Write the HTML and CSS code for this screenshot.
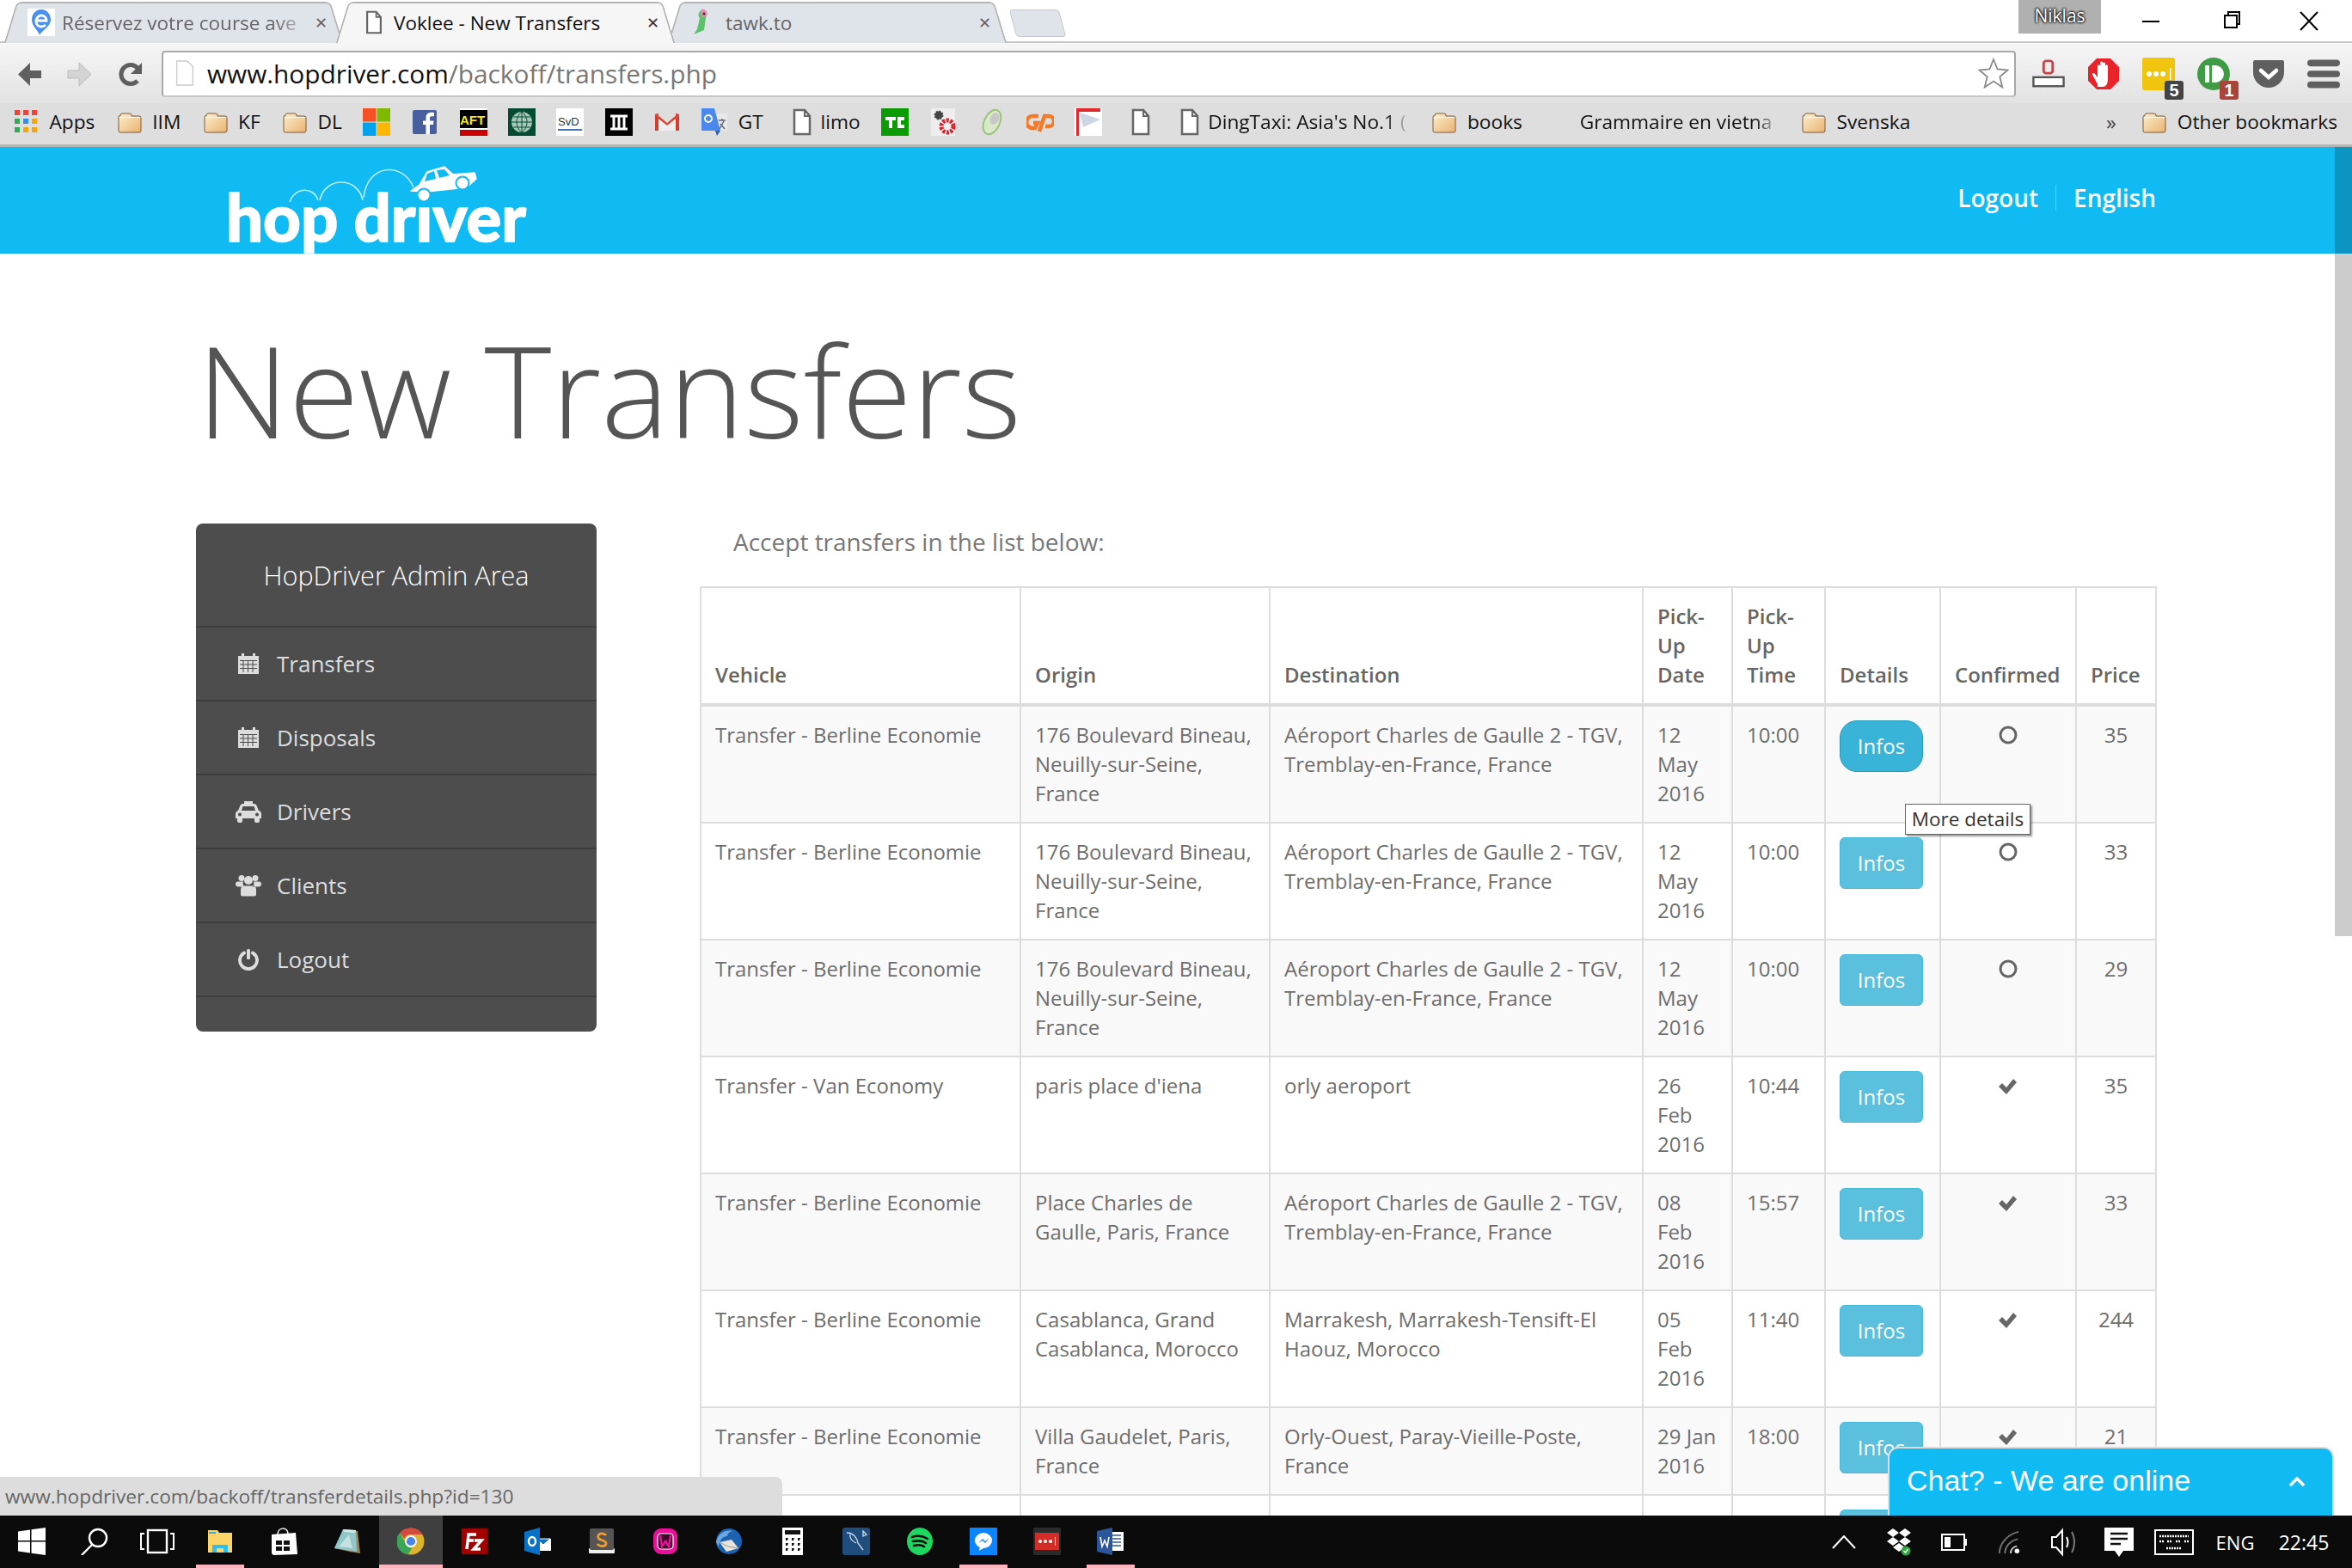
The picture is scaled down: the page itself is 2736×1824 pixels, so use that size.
FILE: index.html
```html
<!DOCTYPE html>
<html lang="en">
<head>
<meta charset="utf-8">
<title>Voklee - New Transfers</title>
<link rel="stylesheet" href="styles.css">
</head>
<body>
<svg class="defs" width="0" height="0" aria-hidden="true">
  <defs>
    <linearGradient id="fg" x1="0" y1="0" x2="1" y2="1"><stop offset="0" stop-color="#fdf0cf"/><stop offset="1" stop-color="#e8b270"/></linearGradient>
    <symbol id="folder" viewBox="0 0 32 32"><path d="M5 8q0-2 2-2h9q2 0 2 2v1h9q2 0 2 2v15q0 2-2 2H5q-2 0-2-2V10q0-2 2-1z" fill="url(#fg)" stroke="#7c5a3a" stroke-width="1"/><path d="M3.600 10.500h24.800" stroke="#fff5dc" stroke-width="1"/></symbol>
    <symbol id="page" viewBox="0 0 22 32"><path d="M2 2h12l6 7v21H2z" fill="#fff" stroke="#666" stroke-width="2.500"/><path d="M14 2v7h6" fill="none" stroke="#666" stroke-width="2"/></symbol>
    <symbol id="cal" viewBox="0 0 26 26"><path d="M1 4h4V1h3v3h10V1h3v3h4v21H1z" fill="#ddd"/><g fill="#4d4d4d"><rect x="3" y="9" width="20" height="1"/><rect x="3" y="13.500" width="20" height="1"/><rect x="3" y="18" width="20" height="1"/><rect x="6.500" y="9" width="1" height="14"/><rect x="12" y="9" width="1" height="14"/><rect x="17.500" y="9" width="1" height="14"/></g></symbol>
  </defs>
</svg>

<div class="browser">
  <div class="tabstrip">
    <div class="tab">
      <svg class="fav" viewBox="0 0 32 32"><rect width="32" height="32" fill="#fff"/><path d="M16 1C9 1 5 7 5 13c0 8 9 14 9 18 3-6 13-10 13-18C27 7 23 1 16 1z" fill="#4a90f0"/><path d="M10 14h12c0-4-3-6-6-6s-6 3-6 7 3 6 6 6c2 0 4-1 5-2" fill="none" stroke="#fff" stroke-width="3"/></svg>
      <span class="tabtitle muted fade">Réservez votre course ave</span>
      <span class="tabx">✕</span>
    </div>
    <div class="tab active">
      <svg class="favpage" viewBox="0 0 22 32"><use href="#page"/></svg>
      <span class="tabtitle">Voklee - New Transfers</span>
      <span class="tabx">✕</span>
    </div>
    <div class="tab">
      <svg class="fav" viewBox="0 0 32 32"><path d="M13 2c5 0 6 5 4 9l-2 14-12 5 4-6 3-13c-3-3-1-9 3-9z" fill="#5cc16b"/><path d="M12 1c5-1 8 3 6 8l-5 1c-2-3-3-6-1-9z" fill="#e88bb0"/><circle cx="15" cy="6" r="1.500" fill="#333"/></svg>
      <span class="tabtitle muted">tawk.to</span>
      <span class="tabx">✕</span>
    </div>
    <div class="newtab"></div>
    <div class="spacer"></div>
    <div class="winctl">
      <span class="profile">Niklas</span>
      <svg class="winbtn" viewBox="0 0 92 39"><rect x="36" y="24" width="20" height="2" fill="#000"/></svg>
      <svg class="winbtn" viewBox="0 0 92 39"><path d="M40 18h14v14H40zM44 18v-4h13v14h-3" fill="none" stroke="#000" stroke-width="2"/></svg>
      <svg class="winbtn" viewBox="0 0 92 39"><path d="M36 14l20 21M56 14L36 35" stroke="#000" stroke-width="2"/></svg>
    </div>
  </div>

  <div class="toolbar">
    <svg class="navbtn" viewBox="0 0 33 33"><path d="M17 3L3 16.500 17 30v-9h13v-9H17z" fill="#5f5f5f"/></svg>
    <svg class="navbtn" viewBox="0 0 33 33"><path d="M16 3l14 13.500L16 30v-9H3v-9h13z" fill="#d4d4d4" stroke="#bbb"/></svg>
    <svg class="navbtn" viewBox="0 0 33 33"><path d="M26 24a11 11 0 1 1 0-15" fill="none" stroke="#5f5f5f" stroke-width="5"/><path d="M31 3v13H18z" fill="#5f5f5f"/></svg>
    <div class="omnibox">
      <svg class="omnipage" viewBox="0 0 22 32"><path d="M1 1h13l7 7v23H1z" fill="#fff" stroke="#ccc" stroke-width="1.500"/></svg>
      <span class="url"><b>www.hopdriver.com</b>/backoff/transfers.php</span>
      <svg class="star" viewBox="0 0 36 36"><path d="M18 2l4.500 11.500 12 1-9.200 7.800 3 12.200L18 27.500 7.700 34.500l3-12.200L1.500 14.500l12-1z" fill="#fff" stroke="#8a8a8a" stroke-width="1.800"/></svg>
    </div>
    <div class="exts">
      <div class="ext"><svg viewBox="0 0 40 34"><rect x="14" y="1" width="11" height="15" rx="3" fill="none" stroke="#c0474a" stroke-width="3"/><rect x="1.500" y="21" width="37" height="11" fill="#fff" stroke="#555" stroke-width="2.500"/></svg></div>
      <div class="ext"><svg viewBox="0 0 38 38"><path d="M11 1h16l10 10v16L27 37H11L1 27V11z" fill="#e8232a"/><path d="M12 31L6 20c-1-2 2-3 3-1l3 4V10c0-2 3-2 3 0v7-11c0-2 3-2 3 0v11-10c0-2 3-2 3 0v10-7c0-2 3-2 3 0v15c0 5-2 9-6 9h-6z" fill="#fff"/></svg></div>
      <div class="ext"><svg viewBox="0 0 38 38"><rect width="38" height="38" rx="3" fill="#f0c40f"/><circle cx="8" cy="19" r="3" fill="#fff"/><circle cx="16" cy="19" r="3" fill="#fff"/><circle cx="24" cy="19" r="3" fill="#fff"/><rect x="32" y="12" width="1.500" height="14" fill="#fff"/></svg><span class="badge dark">5</span></div>
      <div class="ext"><svg viewBox="0 0 38 38"><circle cx="19" cy="19" r="19" fill="#3f9c45"/><rect x="9" y="9" width="5" height="20" rx="1" fill="#fff"/><path d="M17 9h4a10 10 0 0 1 0 20h-4z" fill="#fff"/></svg><span class="badge red">1</span></div>
      <div class="ext"><svg viewBox="0 0 38 34"><path d="M3 1h32q2 0 2 2v12a18 18 0 0 1-36 0V3q0-2 2-2z" fill="#5f5f5f"/><path d="M10 13l9 8 9-8" fill="none" stroke="#fff" stroke-width="4.500" stroke-linecap="round"/></svg></div>
      <div class="ext"><svg viewBox="0 0 30 26"><rect width="30" height="6" rx="3" fill="#5f5f5f"/><rect y="10" width="30" height="6" rx="3" fill="#5f5f5f"/><rect y="20" width="30" height="6" rx="3" fill="#5f5f5f"/></svg></div>
    </div>
  </div>

  <div class="bookmarks">
    <a class="bm"><svg class="ic" viewBox="0 0 32 32"><g fill="#f2413a"><rect x="2" y="2" width="6" height="6"/><rect x="12" y="2" width="6" height="6"/><rect x="22" y="2" width="6" height="6"/></g><rect x="2" y="12" width="6" height="6" fill="#34a85a"/><rect x="12" y="12" width="6" height="6" fill="#2f8df0"/><rect x="22" y="12" width="6" height="6" fill="#f2a60c"/><rect x="2" y="22" width="6" height="6" fill="#34a85a"/><rect x="12" y="22" width="6" height="6" fill="#f2a60c"/><rect x="22" y="22" width="6" height="6" fill="#f2a60c"/></svg><span>Apps</span></a>
    <a class="bm"><svg class="ic"><use href="#folder"/></svg><span>IIM</span></a>
    <a class="bm"><svg class="ic"><use href="#folder"/></svg><span>KF</span></a>
    <a class="bm"><svg class="ic"><use href="#folder"/></svg><span>DL</span></a>
    <a class="bm"><svg class="ic" viewBox="0 0 32 32"><rect width="15.500" height="15.500" fill="#f65125"/><rect x="16.500" width="15.500" height="15.500" fill="#7eb900"/><rect y="16.500" width="15.500" height="15.500" fill="#00a3ee"/><rect x="16.500" y="16.500" width="15.500" height="15.500" fill="#ffb800"/></svg></a>
    <a class="bm"><svg class="ic" viewBox="0 0 32 32"><rect x="2" y="2" width="28" height="28" rx="2" fill="#47609d"/><path d="M22 30V19h4l.600-4.500H22v-3c0-1.500.600-2.300 2.300-2.300H27V5c-4-.600-9.500-.500-9.500 6v3.500H14V19h3.500v11z" fill="#fff"/></svg></a>
    <a class="bm"><svg class="ic" viewBox="0 0 32 32"><rect width="32" height="32" fill="#fff"/><rect y="25" width="32" height="7" fill="#cc0000"/><rect y="2" width="32" height="21" fill="#000"/><text x="0" y="19" class="svgtxt aft">AFT</text></svg></a>
    <a class="bm"><svg class="ic" viewBox="0 0 32 32"><rect width="32" height="32" fill="#034c33"/><circle cx="16" cy="16" r="12" fill="#a8c8b8"/><path d="M4 16h24M16 4v24M6 10h20M6 22h20M16 4c-8 6-8 18 0 24M16 4c8 6 8 18 0 24" fill="none" stroke="#034c33"/></svg></a>
    <a class="bm"><svg class="ic" viewBox="0 0 32 32"><rect width="32" height="32" fill="#fff"/><text x="2" y="20" class="svgtxt svd">SvD</text><rect x="2" y="24" width="28" height="2" fill="#4a6fb5"/></svg></a>
    <a class="bm"><svg class="ic" viewBox="0 0 32 32"><rect width="32" height="32" fill="#000"/><path d="M6 9h20M6 24h20M10 9v15M16 9v15M22 9v15" stroke="#fff" stroke-width="3"/></svg></a>
    <a class="bm"><svg class="ic" viewBox="0 0 32 32"><path d="M4 7l12 9 12-9v19H4z" fill="#eee"/><path d="M2 7l4-1v20H2zM30 7l-4-1v20h4z" fill="#d0402f"/><path d="M3 6l13 11L29 6l1 3-14 11L2 9z" fill="#d9493a"/></svg></a>
    <a class="bm"><svg class="ic" viewBox="0 0 32 32"><path d="M13 6h17v20H13z" fill="#e8e8e8"/><path d="M0 0h15l7 26H0z" fill="#4a88ee"/><path d="M16 26l2 6 4-6z" fill="#2a5fc0"/><circle cx="8" cy="12" r="4" fill="none" stroke="#fff" stroke-width="2"/><path d="M20 14h8M24 12v2M21 24l5-9M22 18l5 6" stroke="#667" stroke-width="1.500" fill="none"/></svg><span>GT</span></a>
    <a class="bm"><svg class="ic" viewBox="-5 0 32 32"><use href="#page"/></svg><span>limo</span></a>
    <a class="bm"><svg class="ic" viewBox="0 0 32 32"><rect width="32" height="32" fill="#0a9c00"/><path d="M5 10h12v4h-4v9H9v-9H5zM19 10h8v4h-4v5h4v4h-8z" fill="#fff"/></svg></a>
    <a class="bm"><svg class="ic" viewBox="0 0 32 32"><rect x="2" width="28" height="32" fill="#eee"/><circle cx="11" cy="8" r="4.500" fill="#444" stroke="#444" stroke-dasharray="2 1.500" stroke-width="2"/><circle cx="21" cy="21" r="7" fill="none" stroke="#e0202a" stroke-width="5" stroke-dasharray="3 1.500"/></svg></a>
    <a class="bm"><svg class="ic" viewBox="0 0 32 32"><ellipse cx="16" cy="16" rx="9" ry="15" transform="rotate(25 16 16)" fill="#d8e8c8" stroke="#9cc27a" stroke-width="2"/><ellipse cx="19" cy="12" rx="5" ry="7" transform="rotate(25 19 12)" fill="#c8c8c8"/></svg></a>
    <a class="bm"><svg class="ic" viewBox="0 0 32 32"><path d="M14 9H7a6 6 0 0 0 0 14h3l3-6H8M15 27l6-18h5a6 6 0 0 1 0 12h-4" fill="none" stroke="#f47a28" stroke-width="4.500"/></svg></a>
    <a class="bm"><svg class="ic" viewBox="0 0 32 32"><rect width="32" height="32" fill="#fff"/><path d="M2 0h28v4H5v28H2z" fill="#e0282e"/><path d="M6 5l24 8L10 22z" fill="#b8c4d8" opacity=".7"/></svg></a>
    <a class="bm"><svg class="ic" viewBox="-5 0 32 32"><use href="#page"/></svg></a>
    <a class="bm"><svg class="ic" viewBox="-5 0 32 32"><use href="#page"/></svg><span class="fadebm w-ding">DingTaxi: Asia's No.1 (</span></a>
    <a class="bm"><svg class="ic"><use href="#folder"/></svg><span>books</span></a>
    <a class="bm"><span class="blankic"></span><span class="fadebm w-gram">Grammaire en vietna</span></a>
    <a class="bm"><svg class="ic"><use href="#folder"/></svg><span>Svenska</span></a>
    <span class="spacer"></span>
    <span class="more">»</span>
    <a class="bm other"><svg class="ic"><use href="#folder"/></svg><span>Other bookmarks</span></a>
  </div>
</div>

<div class="page">
  <header class="sitehead">
    <div class="logo">
      <span class="logotext">hop drıver</span>
      <svg class="logoart" viewBox="0 0 300 60">
        <path d="M72 42c6-18 28-18 33-2M107 40c6-28 44-28 50 0M158 37c4-40 46-42 58-12" fill="none" stroke="#fff" stroke-opacity=".7" stroke-width="1.600"/>
        <path d="M213 29l10-7 9-15 20-6 10 9 25-2 2 7-11 10-46 5z" fill="#fff" stroke="#fff" stroke-linejoin="round" stroke-width="1.500"/>
        <path d="M232 9l8-3 2 9-13 3zM243 5l9-1 6 7-12 3z" fill="#0fbbf2"/>
        <circle cx="273" cy="20" r="7.500" fill="#fff" stroke="#0fbbf2" stroke-width="2"/>
        <circle cx="228" cy="34" r="7.500" fill="#fff" stroke="#0fbbf2" stroke-width="2"/>
      </svg>
    </div>
    <nav class="sitenav"><a class="first">Logout</a><a>English</a></nav>
  </header>

  <main class="container">
    <h1>New Transfers</h1>
    <div class="columns">
      <aside class="sidebar">
        <div class="sidetitle">HopDriver Admin Area</div>
        <a class="sideitem"><svg class="sideic" viewBox="0 0 26 26"><use href="#cal"/></svg>Transfers</a>
        <a class="sideitem"><svg class="sideic" viewBox="0 0 26 26"><use href="#cal"/></svg>Disposals</a>
        <a class="sideitem"><svg class="sideic" viewBox="0 0 30 26"><path d="M10 1h10v3h2c1 0 2 1 2.500 2L27 12c2 .5 3 2 3 4v5h-2v3c0 1-1 2-2 2h-2c-1 0-2-1-2-2v-3H8v3c0 1-1 2-2 2H4c-1 0-2-1-2-2v-3H0v-5c0-2 1-3.500 3-4L5.500 6C6 5 7 4 8 4h2zM8.500 7L7 12h16l-1.500-5z" fill="#ddd" fill-rule="evenodd"/><circle cx="5" cy="16.500" r="2" fill="#4d4d4d"/><circle cx="25" cy="16.500" r="2" fill="#4d4d4d"/></svg>Drivers</a>
        <a class="sideitem"><svg class="sideic" viewBox="0 0 30 26"><circle cx="7" cy="4.500" r="3.500" fill="#ddd"/><circle cx="23" cy="4.500" r="3.500" fill="#ddd"/><circle cx="15" cy="7" r="5" fill="#ddd"/><path d="M0 11c0-2 2-2.500 4-2.500h5c-1 2 0 5 1 6H3c-2 0-3-1-3-3.500zM30 11c0-2-2-2.500-4-2.500h-5c1 2 0 5-1 6h7c2 0 3-1 3-3.500zM9 13.500h12c2 0 3 2 3 5v5c0 1-1 2-2 2H8c-1 0-2-1-2-2v-5c0-3 1-5 3-5z" fill="#ddd"/></svg>Clients</a>
        <a class="sideitem"><svg class="sideic" viewBox="0 0 26 26"><path d="M8 5.500a10 10 0 1 0 10 0" fill="none" stroke="#ddd" stroke-width="3.800" stroke-linecap="round"/><rect x="11" y="1" width="4" height="12" rx="1.500" fill="#ddd"/></svg>Logout</a>
        <div class="sidefoot"></div>
      </aside>
      <section class="maincol">
        <p class="lead">Accept transfers in the list below:</p>
        <table class="transfers">
          <colgroup><col class="c1"><col class="c2"><col class="c3"><col class="c4"><col class="c5"><col class="c6"><col class="c7"><col class="c8"></colgroup>
          <thead>
            <tr><th>Vehicle</th><th>Origin</th><th>Destination</th><th>Pick-Up Date</th><th>Pick-Up Time</th><th>Details</th><th>Confirmed</th><th>Price</th></tr>
          </thead>
          <tbody>
            <tr><td>Transfer - Berline Economie</td><td>176 Boulevard Bineau, Neuilly-sur-Seine, France</td><td>Aéroport Charles de Gaulle 2 - TGV, Tremblay-en-France, France</td><td>12 May 2016</td><td>10:00</td><td class="tipcell"><a class="btn hover">Infos</a><span class="tooltip">More details</span></td><td class="ctr"><svg class="st"><circle cx="12" cy="17" r="9" class="ring"/></svg></td><td class="ctr">35</td></tr>
            <tr><td>Transfer - Berline Economie</td><td>176 Boulevard Bineau, Neuilly-sur-Seine, France</td><td>Aéroport Charles de Gaulle 2 - TGV, Tremblay-en-France, France</td><td>12 May 2016</td><td>10:00</td><td><a class="btn">Infos</a></td><td class="ctr"><svg class="st"><circle cx="12" cy="17" r="9" class="ring"/></svg></td><td class="ctr">33</td></tr>
            <tr><td>Transfer - Berline Economie</td><td>176 Boulevard Bineau, Neuilly-sur-Seine, France</td><td>Aéroport Charles de Gaulle 2 - TGV, Tremblay-en-France, France</td><td>12 May 2016</td><td>10:00</td><td><a class="btn">Infos</a></td><td class="ctr"><svg class="st"><circle cx="12" cy="17" r="9" class="ring"/></svg></td><td class="ctr">29</td></tr>
            <tr><td>Transfer - Van Economy</td><td>paris place d'iena</td><td>orly aeroport</td><td>26 Feb 2016</td><td>10:44</td><td><a class="btn">Infos</a></td><td class="ctr"><svg class="st"><path class="tick" d="M1 18l4-4 5 5L18 9l4 4-12 14z"/></svg></td><td class="ctr">35</td></tr>
            <tr><td>Transfer - Berline Economie</td><td>Place Charles de Gaulle, Paris, France</td><td>Aéroport Charles de Gaulle 2 - TGV, Tremblay-en-France, France</td><td>08 Feb 2016</td><td>15:57</td><td><a class="btn">Infos</a></td><td class="ctr"><svg class="st"><path class="tick" d="M1 18l4-4 5 5L18 9l4 4-12 14z"/></svg></td><td class="ctr">33</td></tr>
            <tr><td>Transfer - Berline Economie</td><td>Casablanca, Grand Casablanca, Morocco</td><td>Marrakesh, Marrakesh-Tensift-El Haouz, Morocco</td><td>05 Feb 2016</td><td>11:40</td><td><a class="btn">Infos</a></td><td class="ctr"><svg class="st"><path class="tick" d="M1 18l4-4 5 5L18 9l4 4-12 14z"/></svg></td><td class="ctr">244</td></tr>
            <tr><td>Transfer - Berline Economie</td><td>Villa Gaudelet, Paris, France</td><td>Orly-Ouest, Paray-Vieille-Poste, France</td><td>29 Jan 2016</td><td>18:00</td><td><a class="btn">Infos</a></td><td class="ctr"><svg class="st"><path class="tick" d="M1 18l4-4 5 5L18 9l4 4-12 14z"/></svg></td><td class="ctr">21</td></tr>
            <tr><td></td><td></td><td></td><td></td><td></td><td><a class="btn"></a></td><td></td><td></td></tr>
          </tbody>
        </table>
      </section>
    </div>
  </main>

  <div class="thumb"></div>
  <div class="statusbubble">www.hopdriver.com/backoff/transferdetails.php?id=130</div>
  <div class="chat"><span>Chat? - We are online</span><svg class="chev" viewBox="0 0 22 14"><path d="M3 11l8-8 8 8" fill="none" stroke="#fff" stroke-width="3.500"/></svg></div>
</div>

<footer class="taskbar">
  <div class="tb sys"><svg viewBox="0 0 32 32"><path d="M0 4.500l14-2V15H0zM15.500 2.300L32 0v15H15.500zM0 16.500h14v13l-14-2zM15.500 16.500H32V32l-16.500-2.300z" fill="#fff"/></svg></div>
  <div class="tb sys"><svg viewBox="0 0 32 32"><circle cx="20" cy="12" r="10" fill="none" stroke="#fff" stroke-width="2.400"/><path d="M13 20L1 32" stroke="#fff" stroke-width="2.400"/></svg></div>
  <div class="tb sys"><svg class="wide" viewBox="0 0 40 32"><rect x="9" y="3" width="22" height="26" fill="none" stroke="#fff" stroke-width="2.400"/><path d="M5 7H1v18h4M35 7h4v18h-4" fill="none" stroke="#fff" stroke-width="2"/></svg></div>
  <div class="tb run"><svg viewBox="0 0 32 32"><path d="M2 3h11l2 3h15v23H2z" fill="#fbd568"/><rect x="3" y="5" width="8" height="2" fill="#3ba8e0"/><path d="M7 29v-9h18v9h-5v-5h-8v5z" fill="#2bc0f0"/></svg></div>
  <div class="tb"><svg viewBox="0 0 32 32"><path d="M2 8l28-2 2 25-28 1-2-2z" fill="#fff"/><path d="M9 8c0-9 12-9 12-1" fill="none" stroke="#fff" stroke-width="1.500"/><path d="M7 15h7v5H7zM16 15h7v5h-7zM7 22h7v5H7zM16 22h7v5h-7z" fill="#111"/></svg></div>
  <div class="tb"><svg viewBox="0 0 32 32"><path d="M12 2l16 2 3 26-12-2-18-4z" fill="#9a8458"/><path d="M11 2l15 1 1 25L1 24z" fill="#8fc8c8"/><path d="M11 2l15 1-1 3-13-1z" fill="#d6e8e8"/><path d="M6 22L18 8l4 16z" fill="#c8e0e0"/></svg></div>
  <div class="tb current"><svg viewBox="0 0 32 32"><circle cx="16" cy="16" r="15.500" fill="#ddb32b"/><path d="M16 .500A15.500 15.500 0 0 1 29.500 8H16a8 8 0 0 0-7.500 5L3 6A15.500 15.500 0 0 1 16 .500z" fill="#d24c3e"/><path d="M3 6l6.500 12a8 8 0 0 0 8 5.500l-5 8A15.500 15.500 0 0 1 3 6z" fill="#3aa757"/><circle cx="16" cy="16" r="6" fill="#4a86e8" stroke="#fff" stroke-width="1.800"/></svg></div>
  <div class="tb"><svg viewBox="0 0 32 32"><rect x="1" y="1" width="30" height="30" fill="#a50000" stroke="#700" stroke-dasharray="2 2"/><path d="M7 25L9 8h9M8 15h7M16 15h8L15 25h8" fill="none" stroke="#fff" stroke-width="3.400"/></svg></div>
  <div class="tb"><svg viewBox="0 0 32 32"><path d="M12 13h19v14H12z" fill="#fff"/><path d="M14 13l8 7 8-7z" fill="#0a72c6" stroke="#fff"/><path d="M0 5l18-5v32L0 27z" fill="#0a72c6"/><ellipse cx="9" cy="16" rx="4" ry="5" fill="none" stroke="#fff" stroke-width="2.400"/></svg></div>
  <div class="tb"><svg viewBox="0 0 32 32"><rect x="1" y="24" width="30" height="6" rx="1" fill="#eee"/><rect x="2" y="1" width="28" height="25" rx="2" fill="#555"/><path d="M21 9c-4-4-11-2-9 3 1 3 8 2 9 6 1 4-7 5-10 1" fill="none" stroke="#f39c2a" stroke-width="2.800"/></svg></div>
  <div class="tb"><svg viewBox="0 0 32 32"><rect x="2" y="1" width="28" height="30" rx="9" fill="#ec0f9a"/><rect x="7" y="7" width="18" height="18" rx="4" fill="#3a0a28" stroke="#fff" stroke-width="1.200"/><path d="M10 9l2 13 4-6 4 6 2-13" fill="none" stroke="#ec0f9a" stroke-width="2.400"/></svg></div>
  <div class="tb"><svg viewBox="0 0 32 32"><circle cx="16" cy="16" r="15" fill="#1c62b0"/><path d="M1 17C3 8 10 2 20 4c-4 1-6 3-6 6-5 0-9 4-10 12z" fill="#6aa8e0"/><path d="M5 17l14-3 8 10-14 4z" fill="#e8e4dc"/><path d="M5 17l10 5 12 2" fill="none" stroke="#999"/></svg></div>
  <div class="tb"><svg class="narrow" viewBox="0 0 24 32"><rect width="24" height="32" fill="#fff"/><rect x="3" y="3" width="18" height="5" fill="#111"/><g fill="#111"><path d="M4 12h3l-1 3H4zM11 12h3l-1 3h-2zM18 12h3l-1 3h-2zM4 18h3l-1 3H4zM11 18h3l-1 3h-2zM18 18h3l-1 3h-2zM4 24h3l-1 3H4zM11 24h3l-1 3h-2zM18 24h3l-1 3h-2z"/></g></svg></div>
  <div class="tb"><svg viewBox="0 0 32 32"><rect width="32" height="32" rx="3" fill="#1f4e7e"/><path d="M5 6c8 0 12 6 13 12l6 8M9 8c-1 5 3 8 7 10M24 4l4 4-4 2z" fill="none" stroke="#cde" stroke-width="1.300"/></svg></div>
  <div class="tb"><svg viewBox="0 0 32 32"><ellipse cx="16" cy="16" rx="15" ry="16" fill="#1ed760"/><path d="M7 11c6-2 13-1 18 2M8 16c5-1 11-1 15 2M9 21c4-1 9-1 12 1" fill="none" stroke="#111" stroke-width="2.600" stroke-linecap="round"/></svg></div>
  <div class="tb run"><svg viewBox="0 0 32 32"><rect width="32" height="32" rx="1" fill="#0a84ff"/><ellipse cx="16" cy="15" rx="10" ry="9" fill="#fff"/><path d="M12 22l-1 5 5-3z" fill="#fff"/><path d="M10 18l5-5 3 3 5-4-5 6-3-3z" fill="#0a84ff"/></svg></div>
  <div class="tb"><svg viewBox="0 0 32 32"><rect width="32" height="32" fill="#2a2a2a"/><rect x="2" y="6" width="28" height="20" fill="#d32d27"/><circle cx="8" cy="16" r="2" fill="#fff"/><circle cx="14" cy="16" r="2" fill="#fff"/><circle cx="20" cy="16" r="2" fill="#fff"/><rect x="25" y="11" width="1" height="10" fill="#fff"/></svg></div>
  <div class="tb run"><svg viewBox="0 0 32 32"><path d="M14 5h17v22H14z" fill="#fff"/><path d="M17 9h11M17 13h11M17 17h11M17 21h11" stroke="#2b579a" stroke-width="1.500"/><path d="M0 4l18-4v32L0 28z" fill="#2b579a"/><path d="M4 11l2 11 3-7 3 7 2-11" fill="none" stroke="#fff" stroke-width="1.600"/></svg></div>
  <div class="spacer"></div>
  <div class="tray">
    <div class="ti"><svg viewBox="0 0 30 16"><path d="M2 15L15 1l13 14" fill="none" stroke="#fff" stroke-width="2"/></svg></div>
    <div class="ti"><svg class="drop" viewBox="0 0 28 32"><path d="M7 0l7 5-7 5-7-5zM21 0l7 5-7 5-7-5zM7 10l7 5-7 5-7-5zM21 10l7 5-7 5-7-5zM14 17l7 5-7 5-7-5z" fill="#fff"/><circle cx="22" cy="26" r="5.500" fill="#35a845"/><path d="M19.500 26l2 2 3-4" fill="none" stroke="#fff" stroke-width="1.300"/></svg></div>
    <div class="ti"><svg class="batt" viewBox="0 0 30 20"><rect x="1" y="1" width="26" height="18" fill="none" stroke="#fff" stroke-width="2"/><rect x="4" y="4" width="7" height="12" fill="#fff"/><rect x="28" y="6" width="2" height="8" fill="#fff"/></svg></div>
    <div class="ti"><svg class="wifi" viewBox="0 0 28 28"><path d="M2 28C2 16 12 4 26 1M9 28c0-9 7-16 16-18" fill="none" stroke="#777" stroke-width="2"/><path d="M16 28c0-5 4-9 8-9" fill="none" stroke="#ccc" stroke-width="2"/><circle cx="24" cy="25" r="3" fill="#fff"/></svg></div>
    <div class="ti"><svg class="vol" viewBox="0 0 32 34"><path d="M2 11h5l7-8v28l-7-8H2z" fill="none" stroke="#fff" stroke-width="2"/><path d="M19 11c2 4 2 8 0 12" fill="none" stroke="#fff" stroke-width="2"/><path d="M25 5c4 7 4 17 0 24" fill="none" stroke="#777" stroke-width="2"/></svg></div>
    <div class="ti"><svg class="note" viewBox="0 0 34 34"><path d="M0 0h34v27H22l-5 7-5-7H0z" fill="#fff"/><path d="M7 7h20M7 13h20M7 19h12" stroke="#111" stroke-width="2.400"/></svg></div>
    <div class="ti"><svg class="kbd" viewBox="0 0 46 30"><rect x="1" y="1" width="44" height="28" fill="none" stroke="#fff" stroke-width="2"/><path d="M6 8h34M6 14h6M15 14h6M25 14h6M35 14h5M14 22h18" stroke="#fff" stroke-width="2.500" stroke-dasharray="2 1"/></svg></div>
    <div class="eng">ENG</div>
    <div class="clock">22:45</div>
  </div>
</footer>
</body>
</html>
```
FILE: styles.css
```css
* { box-sizing: border-box; }
html, body { margin: 0; height: 100%; }
body {
  height: 100vh;
  overflow: hidden;
  display: flex;
  flex-direction: column;
  font-family: "Open Sans", "Liberation Sans", sans-serif;
  background: #fff;
  color: #777;
}
.defs { position: absolute; }
.spacer { flex: 1; }

/* browser chrome */
.browser { flex: none; height: 171px; display: flex; flex-direction: column; }
.tabstrip {
  height: 50px;
  display: flex;
  background: #fff;
  padding: 0 4px;
  position: relative;
  box-shadow: inset 0 -3px 0 -1px #c8c8c8;
}
.tab {
  position: relative;
  width: 388px;
  height: 48px;
  margin: 2px -2px 0 0;
  display: flex;
  align-items: center;
  padding: 0 9px 0 28px;
  font-size: 22.500px;
  color: #111;
  z-index: 1;
}
.tab::before, .tab::after {
  content: "";
  position: absolute;
  top: 0;
  bottom: 0;
  width: 56%;
  background: #dfe3ea;
  border-top: 2px solid #b4b4b4;
  z-index: -1;
}
.tab::before { left: 8px; transform: skewX(-17deg); border-left: 2px solid #b4b4b4; border-radius: 6px 0 0 0; }
.tab::after { right: 0; transform: skewX(17deg); border-right: 2px solid #b4b4b4; border-radius: 0 6px 0 0; }
.tab.active { z-index: 2; }
.tab.active::before, .tab.active::after { background: #f6f6f6; }
.fav { width: 32px; height: 32px; flex: none; }
.favpage { width: 20px; height: 28px; flex: none; margin-left: 7px; }
.tabtitle { margin-left: 8px; flex: 1; white-space: nowrap; overflow: hidden; }
.active .tabtitle { margin-left: 13px; }
.muted { color: #666; }
.fade { mask-image: linear-gradient(90deg, #000 85%, transparent); }
.tabx { width: 20px; font-size: 18px; color: #666; text-align: center; flex: none; }
.active .tabx { color: #333; }
.newtab {
  width: 58px;
  height: 32px;
  margin: 11px 0 0 16px;
  background: #dfe3ea;
  border: 1px solid #c4c8ce;
  border-radius: 4px;
  transform: skewX(15deg);
}
.winctl { display: flex; align-items: flex-start; }
.profile {
  width: 96px;
  height: 39px;
  margin-right: 12px;
  background: #b0b0b0;
  color: #fff;
  font-size: 21px;
  line-height: 37px;
  text-align: center;
  text-shadow: 0 0 2px #000, 0 0 3px #000, 0 0 3px #000;
}
.winbtn { width: 92px; height: 39px; display: block; }

.toolbar {
  height: 70px;
  display: flex;
  align-items: flex-start;
  padding: 9px 1px 0 18px;
  gap: 25px;
  background: linear-gradient(#f6f6f6, #e2e2e2);
}
.navbtn { width: 33px; height: 33px; flex: none; margin-top: 11px; }
.omnibox {
  flex: 1;
  height: 54px;
  margin-left: -4px;
  background: #fff;
  border: 2px solid #a8a8a8;
  border-bottom-color: #c4c4c4;
  border-radius: 4px;
  display: flex;
  align-items: center;
  padding: 0 6px 2px 14px;
}
.omnipage { width: 22px; height: 30px; flex: none; }
.url { margin-left: 15px; flex: 1; font-size: 29.800px; color: #777; white-space: nowrap; }
.url b { font-weight: 400; color: #111; }
.star { width: 36px; height: 36px; flex: none; }
.exts { display: flex; margin-left: -19px; }
.ext { width: 64px; height: 54px; display: flex; align-items: center; justify-content: center; position: relative; }
.ext svg { width: 38px; height: 38px; }
.badge {
  position: absolute;
  left: 39px;
  top: 35px;
  width: 22px;
  height: 22px;
  border-radius: 3px;
  color: #fff;
  font: 700 20px/22px "Liberation Sans", sans-serif;
  text-align: center;
}
.badge.dark { background: #444; }
.badge.red { background: #a8443a; }

.bookmarks {
  height: 51px;
  display: flex;
  align-items: center;
  gap: 24.300px;
  padding: 0 17px 5px 15px;
  background: #dedede;
  border-bottom: 3px solid #b4b4b4;
  font-size: 22.700px;
  color: #111;
}
.bm { display: flex; align-items: center; gap: 10.500px; white-space: nowrap; flex: none; }
.ic { width: 32px; height: 32px; flex: none; display: block; }
.blankic { width: 32px; height: 32px; flex: none; }
.svgtxt { font-family: "Liberation Sans", sans-serif; font-weight: 700; }
.aft { font-size: 15px; fill: #ffe600; }
.svd { font-size: 13px; fill: #333; font-weight: 400; }
.fadebm { overflow: hidden; display: block; mask-image: linear-gradient(90deg, #000 88%, transparent); }
.w-ding { width: 235px; }
.w-gram { width: 232px; }
.more { font-size: 24px; color: #444; }
.other { margin-left: 4px; }

/* page */
.page { flex: 1; position: relative; overflow: hidden; min-height: 0; }
.sitehead {
  height: 124px;
  background: #0fbbf2;
  display: flex;
  justify-content: space-between;
  padding: 0 228px 0 263px;
}
.logo { position: relative; height: 124px; }
.logotext {
  display: block;
  font-family: Lato, "Open Sans", sans-serif;
  font-weight: 900;
  font-size: 76px;
  line-height: 124px;
  letter-spacing: 0;
  color: #fff;
  -webkit-text-stroke: 1.500px #fff;
  white-space: nowrap;
  transform: translateY(19px);
}
.logoart { position: absolute; left: 2px; top: 22px; width: 300px; height: 60px; }
.sitenav { display: flex; align-items: flex-start; padding-top: 44px; font-size: 28px; font-weight: 600; color: #fff; }
.sitenav a { line-height: 30px; padding-left: 20px; }
.sitenav .first { padding: 0 20px 0 0; border-right: 1px solid #5cd3f8; }

.container { padding: 0 228px; }
h1 {
  margin: 73px 0 71px 1px;
  font-size: 148.500px;
  line-height: 170px;
  font-weight: 300;
  color: #555;
}
.columns { display: grid; grid-template-columns: 466px 1693px; gap: 120px; align-items: start; }
.sidebar { background: #4d4d4d; border-radius: 8px; color: #ddd; }
.sidetitle {
  height: 121px;
  display: flex;
  align-items: center;
  justify-content: center;
  font-size: 30.600px;
  font-weight: 300;
  color: #fff;
  border-bottom: 2px solid #3d3d3d;
}
.sideitem {
  height: 86px;
  display: flex;
  align-items: center;
  padding-left: 46px;
  font-size: 26px;
  border-bottom: 2px solid #3d3d3d;
}
.sideic { width: 30px; height: 26px; margin-right: 18px; flex: none; }
.sidefoot { height: 40px; }

.lead { margin: 4px 0 35px; padding-left: 39px; font-size: 28px; line-height: 34px; color: #777; }
.transfers { width: 1693px; table-layout: fixed; border-collapse: collapse; font-size: 24px; line-height: 34px; color: #6e6e6e; }
.c1 { width: 372px; } .c2 { width: 290px; } .c3 { width: 434px; } .c4 { width: 104px; }
.c5 { width: 108px; } .c6 { width: 134px; } .c7 { width: 158px; } .c8 { width: 93px; }
.transfers th, .transfers td { border: 2px solid #ddd; padding: 16px; vertical-align: top; text-align: left; }
.transfers th { vertical-align: bottom; font-weight: 600; border-bottom-width: 4px; color: #666; }
.transfers tbody tr:nth-child(odd) { background: #f9f9f9; }
.transfers .ctr { text-align: center; }
.btn {
  display: block;
  width: 97px;
  height: 60px;
  background: #5bc0de;
  border: 1px solid #46b8da;
  border-radius: 6px;
  color: #fff;
  text-align: center;
  line-height: 58px;
}
.btn.hover { background: #39b3d7; border-color: #269abc; border-radius: 20px; }
.tipcell { position: relative; }
.tooltip {
  position: absolute;
  left: 92px;
  top: 113px;
  width: 146px;
  height: 36px;
  background: #fff;
  border: 1px solid #666;
  box-shadow: 2px 2px 2px rgba(0,0,0,.4);
  color: #333;
  font-size: 22.500px;
  line-height: 33px;
  text-align: center;
  white-space: nowrap;
  z-index: 3;
}
.st { width: 24px; height: 34px; display: block; margin: 0 auto; }
.ring { fill: none; stroke: #666; stroke-width: 3; }
.tick { fill: #666; }

.thumb { position: absolute; right: 0; top: 0; width: 20px; height: 918px; background: rgba(0,0,0,.2); }
.statusbubble {
  position: absolute;
  left: 0;
  bottom: 0;
  width: 910px;
  height: 45px;
  background: #ddd;
  border-radius: 0 8px 0 0;
  padding-left: 6px;
  font-size: 22.700px;
  line-height: 45px;
  color: #666;
}
.chat {
  position: absolute;
  left: 2196px;
  bottom: 0;
  width: 519px;
  height: 80px;
  background: #0fbbf2;
  border: 2px solid #dcdcdc;
  border-bottom: 0;
  border-radius: 12px 12px 0 0;
  padding: 0 0 3px 20px;
  display: flex;
  align-items: center;
  font-family: "Liberation Sans", sans-serif;
  font-size: 34px;
  color: #fff;
}
.chev { position: absolute; left: 463px; top: 32px; width: 22px; height: 14px; }

/* taskbar */
.taskbar { flex: none; height: 61px; background: #0b0b0b; display: flex; align-items: stretch; }
.tb { width: 74px; position: relative; display: flex; align-items: center; justify-content: center; padding-bottom: 2px; }
.tb.sys { width: 73px; }
.tb svg { width: 32px; height: 32px; }
.tb svg.wide { width: 40px; }
.tb svg.narrow { width: 24px; }
.tb.current { background: #3f3f3f; }
.tb.current::after, .tb.run::after {
  content: "";
  position: absolute;
  bottom: 0;
  height: 4px;
  left: 9px;
  right: 9px;
  background: #ffb3ba;
}
.tb.current::after { left: 0; right: 0; }
.tray { display: flex; align-items: center; padding-right: 15px; color: #fff; }
.ti { width: 64px; display: flex; justify-content: center; align-items: center; }
.ti svg { width: 30px; height: 16px; display: block; }
.ti svg.drop { width: 28px; height: 32px; }
.ti svg.batt { height: 20px; }
.ti svg.wifi { width: 26px; height: 26px; }
.ti svg.vol { width: 32px; height: 34px; }
.ti svg.note { width: 34px; height: 34px; }
.ti svg.kbd { width: 46px; height: 30px; }
.eng { width: 78px; text-align: center; font-size: 22px; }
.clock { width: 82px; text-align: center; font-size: 23px; }
```
